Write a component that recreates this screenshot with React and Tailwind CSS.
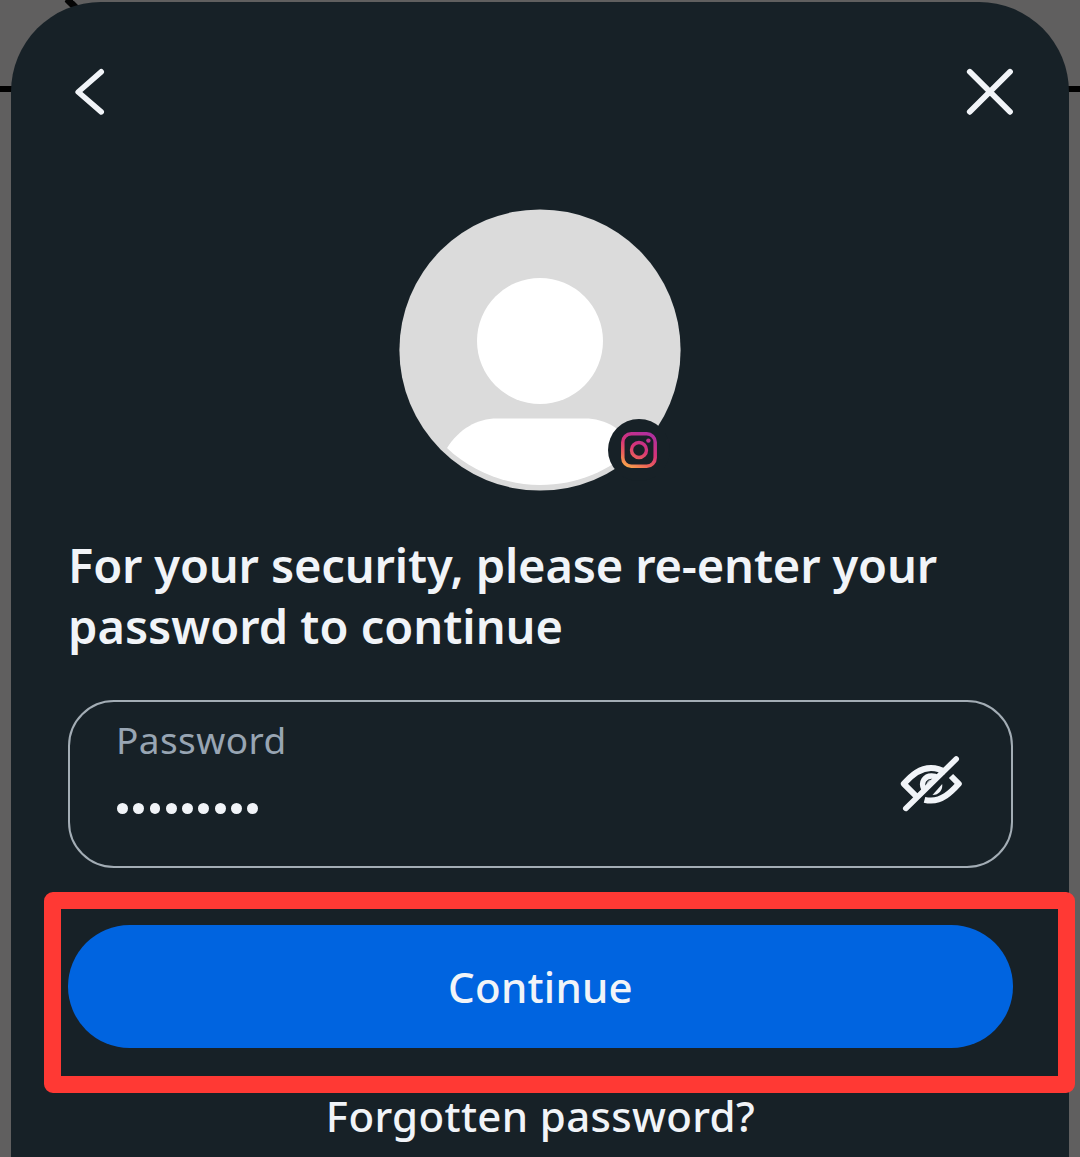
const FONT = "font-['Noto_Sans','Open_Sans',sans-serif]";

function BackIcon() {
  return (
    <svg width="34" height="50" viewBox="0 0 34 50" fill="none" stroke="#f1f4f8" strokeWidth="5.6" strokeLinecap="round" strokeLinejoin="round">
      <path d="M29.2 4.8 L6.2 25 L29.2 44.8" />
    </svg>
  );
}

function CloseIcon() {
  return (
    <svg width="50" height="50" viewBox="0 0 50 50" fill="none" stroke="#f1f4f8" strokeWidth="5.8" strokeLinecap="round">
      <path d="M4.8 4.8 L45 44.8 M45 4.8 L4.8 44.8" />
    </svg>
  );
}

function Avatar() {
  return (
    <svg width="282" height="282" viewBox="0 0 282 282" className="block">
      <circle cx="141" cy="141" r="140.6" fill="#dbdbdb" />
      <circle cx="141" cy="132" r="63" fill="#fff" />
      <path d="M48 239 C60 220 78 209.5 98 209.5 H186 C206 209.5 224 220 235 238 C211 262 178 276 141 276 C106 276 72 262 48 239 Z" fill="#fff" />
    </svg>
  );
}

function InstagramIcon() {
  return (
    <svg width="36" height="36" viewBox="0 0 36 36" fill="none">
      <defs>
        <linearGradient id="ig" x1="8" y1="36" x2="26" y2="0" gradientUnits="userSpaceOnUse">
          <stop offset="0" stopColor="#f9a54b" />
          <stop offset="0.25" stopColor="#ec6458" />
          <stop offset="0.55" stopColor="#d63378" />
          <stop offset="1" stopColor="#ae2f9f" />
        </linearGradient>
      </defs>
      <rect x="1.8" y="1.8" width="32.4" height="32.4" rx="8.5" stroke="url(#ig)" strokeWidth="3.5" />
      <circle cx="18" cy="18" r="7.5" stroke="url(#ig)" strokeWidth="3.4" />
      <circle cx="27.4" cy="8.6" r="2.2" fill="#c13191" />
    </svg>
  );
}

function HiddenIcon() {
  return (
    <svg width="64" height="60" viewBox="0 0 64 60" fill="none" stroke="#f1f4f8" strokeWidth="6" strokeLinejoin="round">
      <path d="M18 43 L4.8 29.8 C13 20.5 21 14 32 14 C37 14 42 15.5 46.5 18.5" />
      <path d="M52 22 L59.8 29.8 C51 39.5 43 46.6 32 46.6 C29.5 46.6 27.5 46.3 25.5 45.8" />
      <path d="M25 35.5 C21 28 26 22 32.5 22 C35 22 37 22.6 39 24" strokeWidth="5.4" />
      <path d="M28.5 31.5 C28 28 30.5 26.5 33 26.8" strokeWidth="2" stroke="#aab1b7" />
      <path d="M43.2 30 C44 36 40 41 33.5 41 Z" fill="#f1f4f8" stroke="none" />
      <path d="M6.8 54.4 L57.2 5" strokeWidth="5.6" strokeLinecap="round" />
    </svg>
  );
}

export default function App() {
  return (
    <div className={`relative h-[1157px] w-[1080px] overflow-hidden bg-[#605f5f] pt-[2px] pl-[11px] ${FONT}`}>
      <div className="absolute top-[86px] left-0 h-[6px] w-full bg-black" />
      <svg className="absolute top-0 left-[62px]" width="20" height="12" viewBox="0 0 20 12" fill="none" stroke="#050505" strokeWidth="7">
        <path d="M9 -3 L7 1 L15 9" />
      </svg>

      <main className="relative flex h-[1155px] w-[1058px] flex-col rounded-t-[90px] bg-[#172127] pr-[56px] pl-[57px] text-[#f1f4f8]">
        <header className="flex items-center justify-between pt-[65px]">
          <button aria-label="Back" className="ml-[4px]"><BackIcon /></button>
          <button aria-label="Close" className="-mr-[2px]"><CloseIcon /></button>
        </header>

        <div className="relative mt-[92px] ml-[331px] w-[282px]">
          <Avatar />
          <div className="absolute top-[210px] left-[209px] flex size-[62px] items-center justify-center rounded-full bg-[#172127]">
            <InstagramIcon />
          </div>
        </div>

        <h1 className="mt-[44px] text-[47px] leading-[61px] font-semibold whitespace-nowrap">
          <span className="block tracking-[-0.15px]">For your security, please re-enter your</span>
          <span className="block">password to continue</span>
        </h1>

        <label className="mt-[43px] flex h-[168px] w-[945px] shrink-0 items-center justify-between rounded-[46px] border-2 border-[#a3adb5] pr-[48px] pl-[47px]">
          <span className="flex h-full flex-col pt-[14px]">
            <span className="-ml-px text-[37px] leading-[48px] tracking-[0.4px] text-[#98a5b3]">Password</span>
            <span className="mt-[39px] flex gap-[5.4px]">
              {Array.from({ length: 9 }, (_, i) => (
                <span key={i} className="size-[10.9px] rounded-full bg-[#f1f4f8]" />
              ))}
            </span>
          </span>
          <HiddenIcon />
        </label>

        <button className="mt-[57px] h-[123px] w-[945px] shrink-0 rounded-full bg-[#0064e0] text-[42px] font-medium tracking-[0.25px]">
          Continue
        </button>
        <a className="mt-[39px] text-center text-[42px] leading-[58px] font-medium tracking-[0.35px]">Forgotten password?</a>
      </main>

      <div className="absolute top-[892px] left-[44px] h-[201px] w-[1031px] rounded-[9px] border-[17px] border-[#ff3934]" />
    </div>
  );
}
